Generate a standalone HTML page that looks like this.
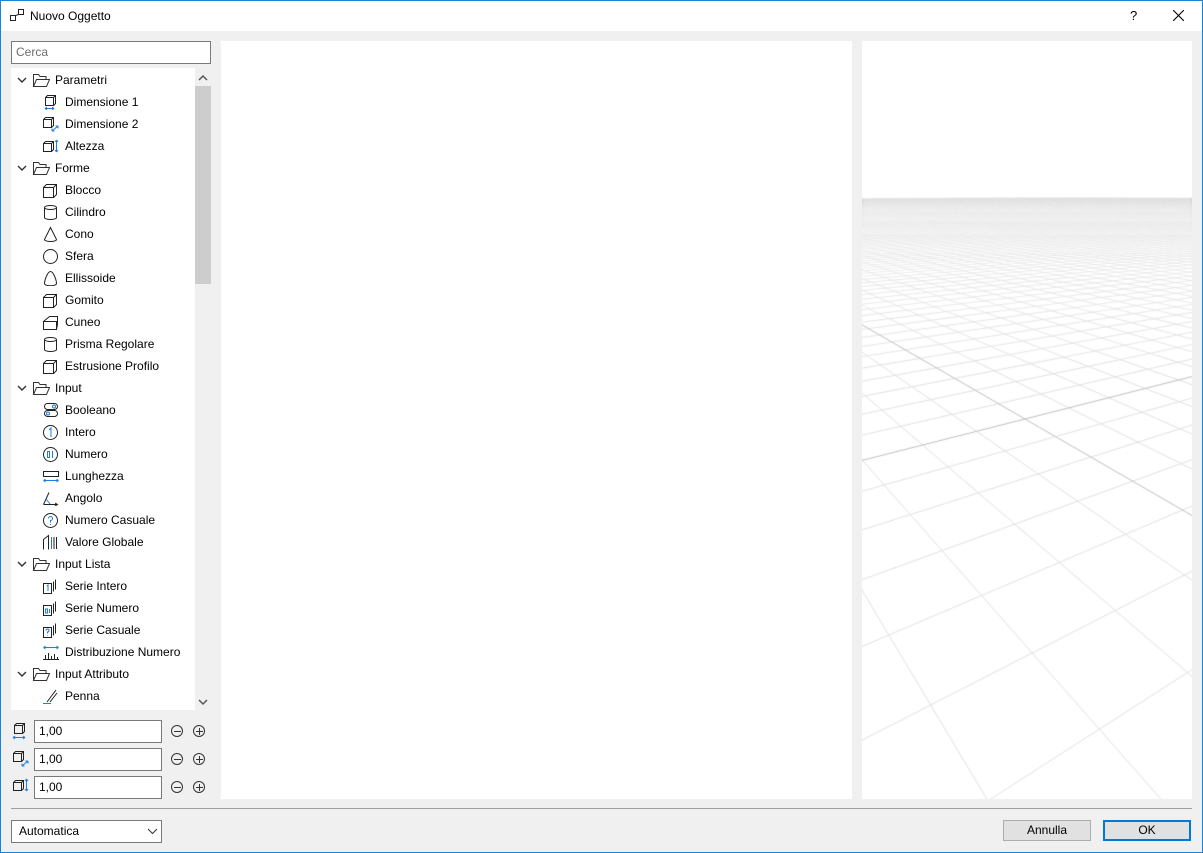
<!DOCTYPE html>
<html><head><meta charset="utf-8">
<style>
*{box-sizing:border-box;margin:0;padding:0}
body{width:1203px;height:853px;overflow:hidden;background:#f0f0f0;font-family:"Liberation Sans",sans-serif;font-size:12px;color:#000;position:relative}
.abs{position:absolute}
#frame{left:0;top:0;width:1203px;height:853px;border:1px solid #1883d7;pointer-events:none;z-index:9}
#title{left:0;top:0;width:1203px;height:31px;background:#fff}
.row{position:absolute;height:22px;line-height:22px;white-space:nowrap}
.ic{position:absolute;top:3px;width:18px;height:16px}
.inp{position:absolute;left:34px;width:128px;height:23px;background:#fff;border:1px solid #7a7a7a;padding-left:4px;line-height:21px}
.circ{position:absolute;width:12px;height:12px;border:1px solid #333;border-radius:50%}
.btn{position:absolute;top:820px;height:21px;background:#e1e1e1;border:1px solid #adadad;text-align:center;line-height:19px}
</style></head><body>
<div id="title" class="abs">
<svg class="abs" style="left:9px;top:8px" width="16" height="14" viewBox="0 0 16 14" fill="none" stroke="#222"><rect x="1.5" y="7.5" width="5" height="5"/><rect x="9.5" y="1.5" width="5" height="5"/><path d="M6.5 7.5 L9.5 6.5"/></svg>
<div class="abs" style="left:30px;top:9px;font-size:12px">Nuovo Oggetto</div>
<div class="abs" style="left:1130px;top:8px;font-size:13px">?</div>
<svg class="abs" style="left:1173px;top:10px" width="11" height="11" stroke="#000" stroke-width="1.1"><path d="M0 0L11 11M11 0L0 11"/></svg>
</div>
<div class="abs" style="left:11px;top:41px;width:200px;height:23px;background:#fff;border:1px solid #7a7a7a;padding-left:4px;line-height:21px;color:#6d6d6d">Cerca</div>
<div class="abs" id="tree" style="left:11px;top:68px;width:184px;height:642px;background:#fff;overflow:hidden"></div>
<div class="abs" style="left:195px;top:68px;width:16px;height:642px;background:#f0f0f0"></div>
<div class="abs" style="left:195px;top:86px;width:16px;height:198px;background:#cdcdcd"></div>
<svg class="abs" style="left:198px;top:74px" width="10" height="8" fill="none" stroke="#555" stroke-width="1.5"><path d="M1 6L5 2L9 6"/></svg>
<svg class="abs" style="left:198px;top:698px" width="10" height="8" fill="none" stroke="#555" stroke-width="1.5"><path d="M1 2L5 6L9 2"/></svg>

<div class="abs" style="left:221px;top:41px;width:631px;height:758px;background:#fff"></div>
<canvas id="cv" class="abs" style="left:862px;top:41px" width="330" height="758"></canvas>

<svg class="abs" style="left:12px;top:722px" width="16" height="18" fill="none" stroke="#222"><rect x="2.5" y="3.5" width="8" height="8"/><path d="M2.5 3.5l2-2h8v8l-2 2M10.5 3.5l2-2" /><path d="M1 15.5h12M1 15.5l2-1.5M1 15.5l2 1.5M13 15.5l-2-1.5M13 15.5l-2 1.5" stroke="#1e7ce0"/></svg>
<svg class="abs" style="left:12px;top:750px" width="18" height="18" fill="none" stroke="#222"><rect x="1.5" y="3.5" width="8" height="8"/><path d="M1.5 3.5l2-2h8v8l-2 2M9.5 3.5l2-2"/><path d="M10 16l6-5M10 16v-2.5M10 16h2.5M16 11v2.5M16 11h-2.5" stroke="#1e7ce0"/></svg>
<svg class="abs" style="left:12px;top:778px" width="18" height="16" fill="none" stroke="#222"><rect x="1.5" y="4.5" width="8" height="8"/><path d="M1.5 4.5l2-2h8v8l-2 2M9.5 4.5l2-2"/><path d="M14.5 1v12M14.5 1l-1.5 2M14.5 1l1.5 2M14.5 13l-1.5-2M14.5 13l1.5-2" stroke="#1e7ce0"/></svg>
<div class="inp" style="top:720px">1,00</div>
<div class="inp" style="top:748px">1,00</div>
<div class="inp" style="top:776px">1,00</div>
<div id="pm"></div>

<div class="abs" style="left:11px;top:808px;width:1181px;height:1px;background:#a0a0a0"></div>
<div class="abs" style="left:11px;top:820px;width:151px;height:23px;background:#fff;border:1px solid #7a7a7a;padding-left:7px;line-height:21px">Automatica</div>
<svg class="abs" style="left:147px;top:828px" width="11" height="7" fill="none" stroke="#333"><path d="M1 1l4.5 4.5L10 1"/></svg>
<div class="btn" style="left:1003px;width:88px">Annulla</div>
<div class="btn" style="left:1103px;width:88px;border:2px solid #0078d7;line-height:17px">OK</div>
<div class="abs" id="frame"></div>
<script>
var items=[
[0,"Parametri"],[1,"Dimensione 1","d1"],[1,"Dimensione 2","d2"],[1,"Altezza","h"],
[0,"Forme"],[1,"Blocco","box"],[1,"Cilindro","cyl"],[1,"Cono","cone"],[1,"Sfera","sph"],[1,"Ellissoide","ell"],[1,"Gomito","box"],[1,"Cuneo","wedge"],[1,"Prisma Regolare","cyl"],[1,"Estrusione Profilo","box"],
[0,"Input"],[1,"Booleano","bool"],[1,"Intero","c1"],[1,"Numero","c01"],[1,"Lunghezza","len"],[1,"Angolo","ang"],[1,"Numero Casuale","cq"],[1,"Valore Globale","glob"],
[0,"Input Lista"],[1,"Serie Intero","s1"],[1,"Serie Numero","s01"],[1,"Serie Casuale","sq"],[1,"Distribuzione Numero","dist"],
[0,"Input Attributo"],[1,"Penna","pen"],[1,"","pen"]];
var B='<path d="M1.5 5.5h10v10h-10zM1.5 5.5l3-3h10v10l-3 3M11.5 5.5l3-3"/>';
var ico={
box:B,
d1:'<path d="M3.5 3.5h8v8h-8zM3.5 3.5l2-2h8v8l-2 2M11.5 3.5l2-2"/><path stroke="#1e7ce0" d="M3 14.5h9M3 14.5l2-1.5M3 14.5l2 1.5M12 14.5l-2-1.5M12 14.5l-2 1.5"/>',
d2:'<path d="M1.5 3.5h8v8h-8zM1.5 3.5l2-2h8v8l-2 2M9.5 3.5l2-2"/><path stroke="#1e7ce0" d="M10 15l6-5M10 15v-2.5M10 15h2.5M16 10v2.5M16 10h-2.5"/>',
h:'<path d="M1.5 5.5h8v8h-8zM1.5 5.5l2-2h8v8l-2 2M9.5 5.5l2-2"/><path stroke="#1e7ce0" d="M14.5 2v12M14.5 2l-1.5 2M14.5 2l1.5 2M14.5 14l-1.5-2M14.5 14l1.5-2"/>',
cyl:'<ellipse cx="8.5" cy="3.5" rx="6" ry="2"/><path d="M2.5 3.5v10a6 2 0 0 0 12 0v-10"/>',
cone:'<path d="M8.5 1.5L2.5 13.5a6 2 0 0 0 12 0z"/>',
sph:'<circle cx="8.5" cy="8.5" r="7"/>',
ell:'<path d="M8.5 1.5c-3 0-6 9-6 12s12 3 12 0-3-12-6-12z"/>',
wedge:'<path d="M1.5 7.5h13v8h-13zM1.5 7.5l6-5h8v8l-1 5"/>',
bool:'<rect x="2.5" y="1.5" width="13" height="6" rx="3"/><rect x="2.5" y="8.5" width="13" height="6" rx="3"/><circle cx="12" cy="4.5" r="1.5" stroke="#1e7ce0"/><circle cx="6" cy="11.5" r="1.5" stroke="#1e7ce0"/>',
c1:'<circle cx="8.5" cy="8.5" r="7"/><path stroke="#1e7ce0" d="M7 6l2-2v9"/>',
c01:'<circle cx="8.5" cy="8.5" r="7"/><path stroke="#1e7ce0" d="M5.5 5.5h2v6h-2zM10.5 5v7"/>',
len:'<rect x="1.5" y="3.5" width="15" height="5"/><path stroke="#1e7ce0" d="M1.5 12.5h15M1.5 12.5l2-1.5M1.5 12.5l2 1.5M16.5 12.5l-2-1.5M16.5 12.5l-2 1.5"/>',
ang:'<path d="M1.5 14.5L7 2.5M1.5 14.5h14M13 13l2.5 1.5L13 16"/><path stroke="#1e7ce0" d="M4 9l4 5"/>',
cq:'<circle cx="8.5" cy="8.5" r="7"/><path stroke="#1e7ce0" d="M6.5 6.5a2 2 0 1 1 2 2v2M8.5 12v1"/>',
glob:'<path d="M1.5 15.5v-10l5-4v14M9.5 3v12M12 3v12M14.5 3v12"/><path stroke="#1e7ce0" d="M9.5 3v12"/>',
s1:'<path d="M1.5 5.5h8v10h-8zM11.5 3.5v10M13.5 1.5v10"/><path stroke="#1e7ce0" d="M5 8l1-1v6"/>',
s01:'<path d="M1.5 5.5h8v10h-8zM11.5 3.5v10M13.5 1.5v10"/><path stroke="#1e7ce0" d="M3.5 9h2v4h-2zM7.5 9v4"/>',
sq:'<path d="M1.5 5.5h8v10h-8zM11.5 3.5v10M13.5 1.5v10"/><path stroke="#1e7ce0" d="M4 8.5a1.5 1.5 0 1 1 1.5 1.5v1.5M5.5 13v.5"/>',
dist:'<path stroke="#1e7ce0" d="M1.5 3.5h15M1.5 3.5l2-1.5M1.5 3.5l2 1.5M16.5 3.5l-2-1.5M16.5 3.5l-2 1.5"/><path d="M1 15.5h16M3.5 15v-4M6.5 15v-6M9.5 15v-3M12.5 15v-5M15.5 15v-2"/>',
pen:'<path d="M5 14L14 2M8 14L15 5"/><path stroke="#1e7ce0" d="M1 15.5h8"/>'
};
var folder='<svg class="ic" style="left:21px" width="18" height="16" fill="none" stroke="#333"><path d="M1.5 14.5v-12h5l1.5 2h6v3M1.5 14.5l3-7h13l-3 7z"/></svg>';
var chev='<svg style="position:absolute;left:6px;top:8px" width="10" height="7" fill="none" stroke="#333" stroke-width="1.4"><path d="M1 1l4 4l4-4"/></svg>';
var h='';
items.forEach(function(it,i){
 var top=i*22+1;
 if(it[0]==0){h+='<div class="row" style="left:0;top:'+top+'px;width:184px">'+chev+folder+'<span style="position:absolute;left:44px">'+it[1]+'</span></div>';}
 else{h+='<div class="row" style="left:0;top:'+top+'px;width:184px"><svg class="ic" style="left:31px" width="18" height="17" fill="none" stroke="#222">'+ico[it[2]]+'</svg><span style="position:absolute;left:54px">'+it[1]+'</span></div>';}
});
document.getElementById('tree').innerHTML=h;
var p='';
[731,759,787].forEach(function(y){
 p+='<div class="circ" style="left:171px;top:'+(y-6)+'px"></div><div class="abs" style="left:174px;top:'+y+'px;width:7px;height:1px;background:#333"></div>';
 p+='<div class="circ" style="left:193px;top:'+(y-6)+'px"></div><div class="abs" style="left:196px;top:'+y+'px;width:7px;height:1px;background:#333"></div><div class="abs" style="left:199px;top:'+(y-3)+'px;width:1px;height:7px;background:#333"></div>';
});
document.getElementById('pm').innerHTML=p;
var c=document.getElementById('cv').getContext('2d');
c.fillStyle='#fff';c.fillRect(0,0,330,758);
var ox=1025-862,oy=419-41,v2=[1946-862,185-41],v1=[620-862,185-41],a=0.05,b=0.07;
function P(u,v){var d=1+a*u+b*v;return[(a*u*v2[0]+b*v*v1[0]+ox)/d,(a*u*v2[1]+b*v*v1[1]+oy)/d];}
var R=200,NB=8,paths=[];
for(var i=0;i<NB;i++)paths.push(new Path2D());
function line(fixU,k){
 var prev=null;
 for(var t=-R;t<=R;t+=0.5){var u=fixU?k:t,v=fixU?t:k;
  var d=1+a*u+b*v;
  if(u*u+v*v>R*R||d<0.05){prev=null;continue;}
  var q=P(u,v);
  if(prev){var bk=Math.min(NB-1,Math.floor(Math.log(Math.max(d,1))/Math.log(12)*NB));paths[bk].moveTo(prev[0],prev[1]);paths[bk].lineTo(q[0],q[1]);}
  prev=q;}
}
for(var k=-R;k<=R;k++){if(k==0)continue;line(true,k);line(false,k);}
c.lineWidth=1;
for(var i=0;i<NB;i++){c.globalAlpha=Math.max(0.12,1-i*0.13);c.strokeStyle='#e2e2e2';c.stroke(paths[i]);}
c.globalAlpha=1;
var ax=new Path2D();
for(var t=-R;t<=R;t+=0.5){var d=1+a*t;if(d>0.05){var q=P(t,0);t==-R?ax.moveTo(q[0],q[1]):ax.lineTo(q[0],q[1]);}}
c.strokeStyle='#c0c0c0';
c.beginPath();var st=false;for(var t=-R;t<=R;t+=0.5){if(1+a*t<0.05)continue;var q=P(t,0);if(!st){c.moveTo(q[0],q[1]);st=true;}else c.lineTo(q[0],q[1]);}c.stroke();
c.beginPath();st=false;for(var t=-R;t<=R;t+=0.5){if(1+b*t<0.05)continue;var q=P(0,t);if(!st){c.moveTo(q[0],q[1]);st=true;}else c.lineTo(q[0],q[1]);}c.stroke();
</script>
</body></html>
